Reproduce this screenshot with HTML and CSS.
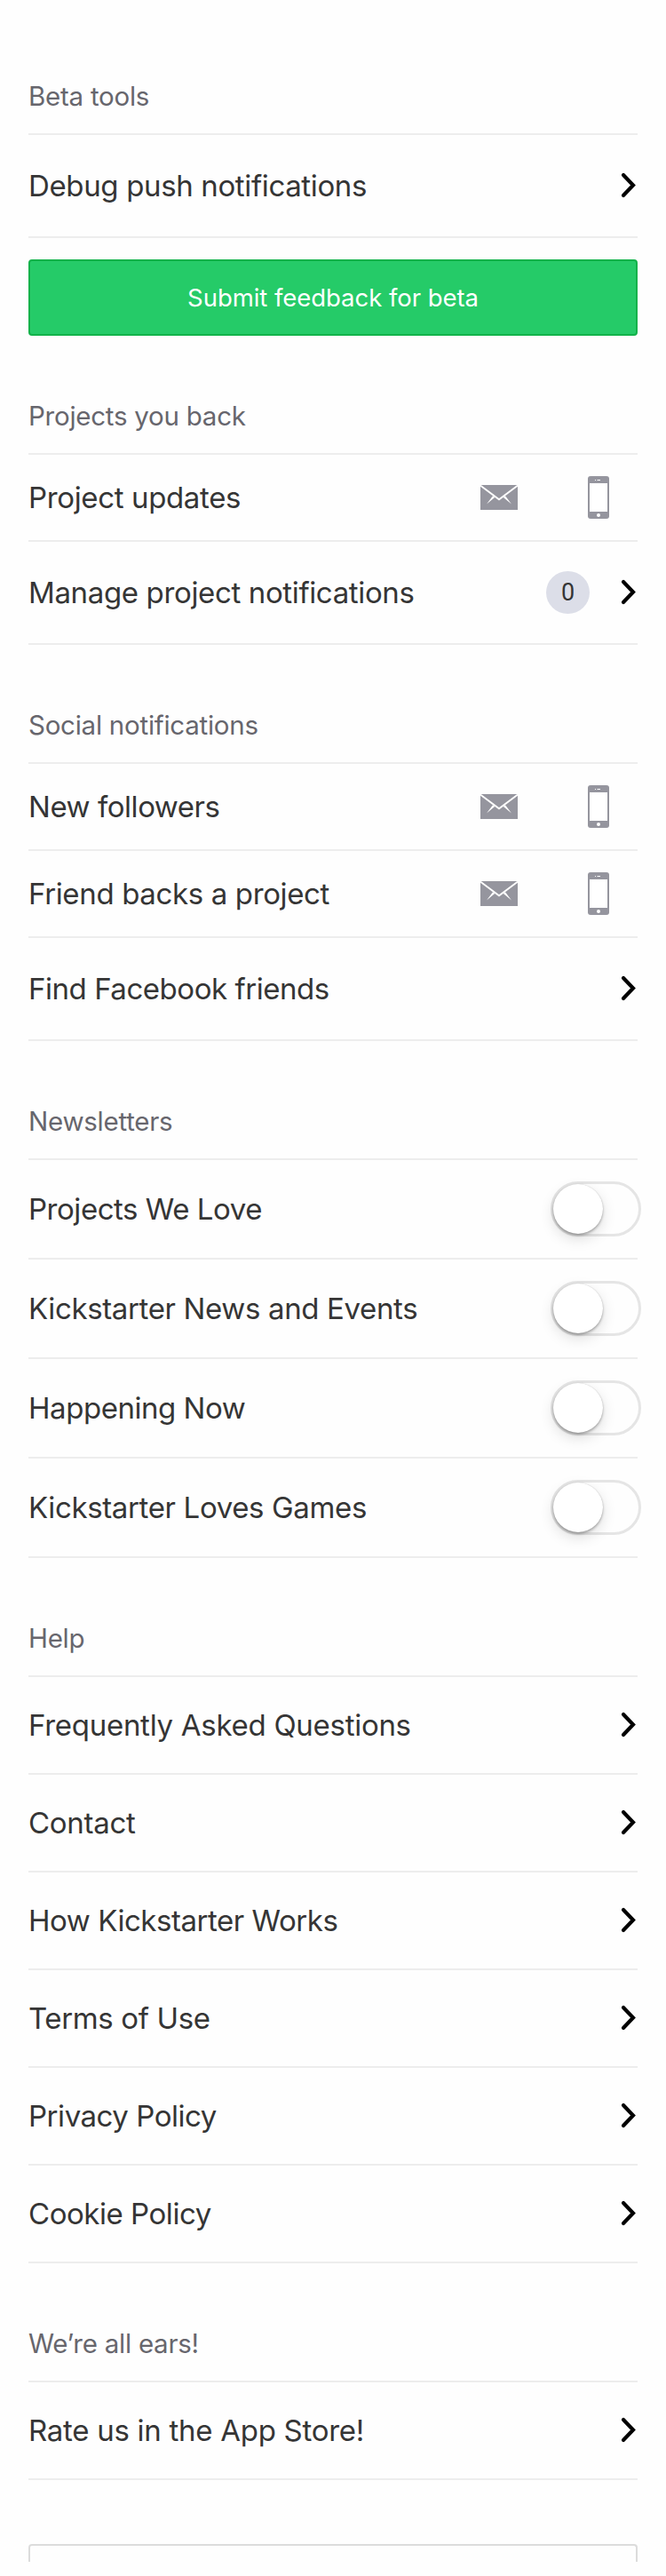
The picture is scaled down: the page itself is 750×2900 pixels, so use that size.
FILE: index.html
```html
<!DOCTYPE html>
<html lang="en">
<head>
<meta charset="utf-8">
<title>Settings</title>
<link rel="stylesheet" href="styles.css">
</head>
<body>
<svg class="sprite" width="0" height="0" aria-hidden="true">
  <symbol id="chevron" viewBox="0 0 18 30"><path d="M3 3 L14 14.5 L3 26" fill="none" stroke="#000" stroke-width="4.2" stroke-linecap="round"/></symbol>
  <symbol id="mail" viewBox="0 0 42 28"><path d="M0 0H42V28H0z" fill="#95959e"/><path d="M0 .6 L21 16.2 L42 .6" fill="none" stroke="#fff" stroke-width="1.9"/><path d="M14 12.2 L16.4 13.8 L7 21.6z M28 12.2 L25.6 13.8 L35 21.6z" fill="#fff"/></symbol>
  <symbol id="phone" viewBox="0 0 24 48"><rect width="24" height="48" rx="3" fill="#95959e"/><path d="M2 8H22V40H2z" fill="#fff"/><circle cx="12" cy="44" r="2" fill="#fff"/><path d="M10.5 4.5H14M8 4.5H9" stroke="#fff" stroke-width="1"/></symbol>
</svg>
<main class="settings">
  <section>
    <h2 class="heading heading-first">Beta tools</h2>
    <div class="row row-tall"><span class="label">Debug push notifications</span><svg class="chevron"><use href="#chevron"/></svg></div>
    <button class="submit">Submit feedback for beta</button>
  </section>
  <section>
    <h2 class="heading">Projects you back</h2>
    <div class="row row-short"><span class="label">Project updates</span><span class="channels"><svg class="mail"><use href="#mail"/></svg><svg class="phone"><use href="#phone"/></svg></span></div>
    <div class="row row-tall"><span class="label">Manage project notifications</span><span class="badge">0</span><svg class="chevron"><use href="#chevron"/></svg></div>
  </section>
  <section>
    <h2 class="heading">Social notifications</h2>
    <div class="row row-short"><span class="label label-tight">New followers</span><span class="channels"><svg class="mail"><use href="#mail"/></svg><svg class="phone"><use href="#phone"/></svg></span></div>
    <div class="row row-short"><span class="label">Friend backs a project</span><span class="channels"><svg class="mail"><use href="#mail"/></svg><svg class="phone"><use href="#phone"/></svg></span></div>
    <div class="row row-tall"><span class="label label-tight">Find Facebook friends</span><svg class="chevron"><use href="#chevron"/></svg></div>
  </section>
  <section>
    <h2 class="heading">Newsletters</h2>
    <div class="row row-switch"><span class="label label-tight">Projects We Love</span><span class="switch"><span class="knob"></span></span></div>
    <div class="row row-switch"><span class="label">Kickstarter News and Events</span><span class="switch"><span class="knob"></span></span></div>
    <div class="row row-switch"><span class="label label-tight">Happening Now</span><span class="switch"><span class="knob"></span></span></div>
    <div class="row row-switch"><span class="label">Kickstarter Loves Games</span><span class="switch"><span class="knob"></span></span></div>
  </section>
  <section>
    <h2 class="heading">Help</h2>
    <div class="row"><span class="label label-loose">Frequently Asked Questions</span><svg class="chevron"><use href="#chevron"/></svg></div>
    <div class="row"><span class="label label-loose">Contact</span><svg class="chevron"><use href="#chevron"/></svg></div>
    <div class="row"><span class="label label-tight">How Kickstarter Works</span><svg class="chevron"><use href="#chevron"/></svg></div>
    <div class="row"><span class="label">Terms of Use</span><svg class="chevron"><use href="#chevron"/></svg></div>
    <div class="row"><span class="label label-tight">Privacy Policy</span><svg class="chevron"><use href="#chevron"/></svg></div>
    <div class="row"><span class="label label-tight">Cookie Policy</span><svg class="chevron"><use href="#chevron"/></svg></div>
  </section>
  <section>
    <h2 class="heading">We’re all ears!</h2>
    <div class="row"><span class="label label-loose">Rate us in the App Store!</span><svg class="chevron"><use href="#chevron"/></svg></div>
  </section>
  <div class="outline-box"></div>
</main>
</body>
</html>
```

FILE: styles.css
```css
* { box-sizing: border-box; }
body { margin: 0; background: #fefefe; font-family: Inter, "Liberation Sans", sans-serif; color: #353535; }
.sprite { display: block; }
.settings { width: 750px; height: 2900px; padding: 0 32px; overflow: hidden; }
.heading {
  display: flex; align-items: flex-end; height: 134px; margin: 0; padding: 0 0 22px;
  border-bottom: 2px solid #ededed; color: #67666d;
  font-size: 29.5px; line-height: 40px; font-weight: 400; letter-spacing: -0.25px;
}
.heading-first { height: 152px; }
.row { display: flex; align-items: center; height: 110px; border-bottom: 2px solid #ededed; }
.row-tall { height: 116px; }
.row-short { height: 98px; }
.row-switch { height: 112px; }
.label { flex: 1; font-size: 33px; line-height: 44px; letter-spacing: -0.36px; white-space: nowrap; }
.label-tight { letter-spacing: -0.46px; }
.label-loose { letter-spacing: -0.28px; }
.chevron { width: 18px; height: 30px; margin-right: 1px; }
.channels { display: flex; align-items: center; gap: 79px; margin-right: 32px; }
.mail { width: 42px; height: 28px; }
.phone { width: 24px; height: 48px; }
.badge {
  display: flex; align-items: center; justify-content: center; width: 49px; height: 48px;
  margin-right: 35px; border-radius: 50%; background: #dcdee8; font-family: Roboto, sans-serif; font-size: 27px;
}
.submit {
  display: block; width: 100%; height: 86px; margin: 24px 0 0; padding: 0;
  border: 2px solid #12b24a; border-radius: 4px; background: #25cb68;
  color: #fff; font: 400 27.5px/40px Inter, "Liberation Sans", sans-serif; letter-spacing: -0.05px;
}
.switch { display: flex; width: 102px; height: 62px; margin-right: -4px; border: 3px solid #e5e5e5; border-radius: 31px; }
.knob { width: 56px; height: 56px; border-radius: 50%; background: #fff; box-shadow: 0 6px 16px rgba(0,0,0,.13), 0 2px 3px rgba(0,0,0,.28), 0 0 1px rgba(0,0,0,.2); }
.outline-box { height: 20px; margin-top: 72px; border: 2px solid #dcdcdc; border-bottom: 0; border-radius: 4px 4px 0 0; }
```
